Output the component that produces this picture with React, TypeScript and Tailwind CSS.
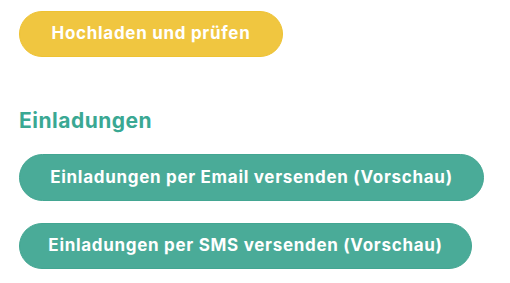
export default function App() {
  return (
    <div className="min-h-screen bg-white pl-[19px] pt-[11px] font-['Inter',sans-serif]">
      <div className="flex flex-col items-start">
        <button className="h-[46px] w-[264px] rounded-full border border-[#eec232] bg-[#f0c640] text-[17px] font-bold tracking-[0.7px] text-white">
          Hochladen und prüfen
        </button>
        <h2 className="mt-[49px] text-[21px] font-bold leading-[30px] tracking-[0.5px] text-[#3aa893]">Einladungen</h2>
        <button className="mt-[18px] h-[47px] w-[465px] rounded-full border border-[#43a692] bg-[#4aab98] text-[17px] font-bold tracking-[0.7px] text-white">
          Einladungen per Email versenden (Vorschau)
        </button>
        <button className="mt-[22px] h-[46px] w-[453px] rounded-full border border-[#43a692] bg-[#4aab98] text-[17px] font-bold tracking-[0.7px] text-white">
          Einladungen per SMS versenden (Vorschau)
        </button>
      </div>
    </div>
  )
}
